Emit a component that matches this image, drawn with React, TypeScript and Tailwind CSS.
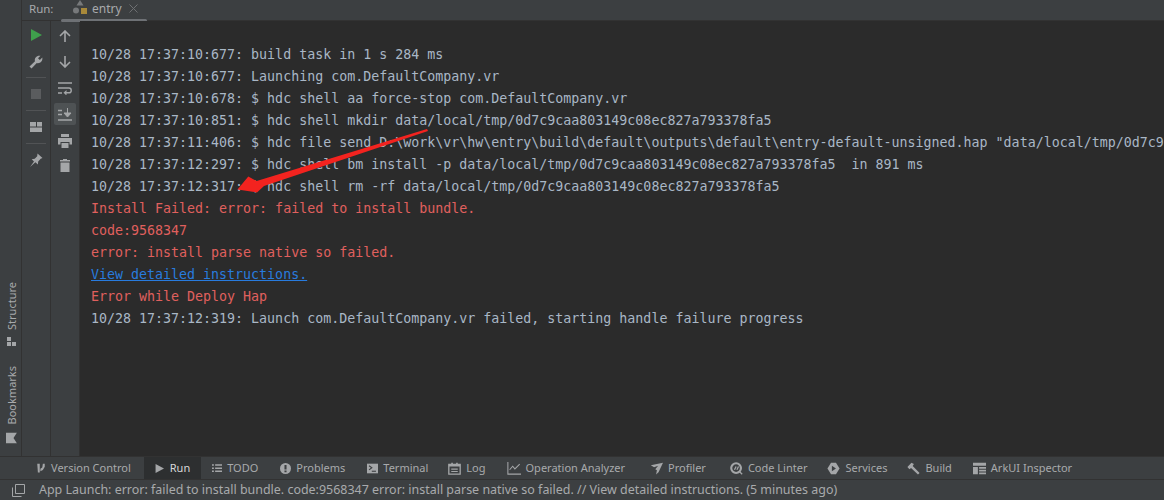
const g = "#a4a6a8";

function Ico({ size = 16, children, className = "" }: { size?: number; children: React.ReactNode; className?: string }) {
  return (
    <svg width={size} height={size} viewBox="0 0 16 16" className={"shrink-0 " + className}>
      {children}
    </svg>
  );
}

const logLines = [
  { t: "10/28 17:37:10:677: build task in 1 s 284 ms", c: "text-[#a9b7c6]" },
  { t: "10/28 17:37:10:677: Launching com.DefaultCompany.vr", c: "text-[#a9b7c6]" },
  { t: "10/28 17:37:10:678: $ hdc shell aa force-stop com.DefaultCompany.vr", c: "text-[#a9b7c6]" },
  { t: "10/28 17:37:10:851: $ hdc shell mkdir data/local/tmp/0d7c9caa803149c08ec827a793378fa5", c: "text-[#a9b7c6]" },
  { t: '10/28 17:37:11:406: $ hdc file send D:\\work\\vr\\hw\\entry\\build\\default\\outputs\\default\\entry-default-unsigned.hap "data/local/tmp/0d7c9', c: "text-[#a9b7c6]" },
  { t: "10/28 17:37:12:297: $ hdc shell bm install -p data/local/tmp/0d7c9caa803149c08ec827a793378fa5  in 891 ms", c: "text-[#a9b7c6]" },
  { t: "10/28 17:37:12:317: $ hdc shell rm -rf data/local/tmp/0d7c9caa803149c08ec827a793378fa5", c: "text-[#a9b7c6]" },
  { t: "Install Failed: error: failed to install bundle.", c: "text-[#e0605e]" },
  { t: "code:9568347", c: "text-[#e0605e]" },
  { t: "error: install parse native so failed.", c: "text-[#e0605e]" },
  { t: "View detailed instructions.", c: "text-[#287bde] underline" },
  { t: "Error while Deploy Hap", c: "text-[#e0605e]" },
  { t: "10/28 17:37:12:319: Launch com.DefaultCompany.vr failed, starting handle failure progress", c: "text-[#a9b7c6]" },
];

const tabs: { label: string; active?: boolean; cls: string; icon: React.ReactNode }[] = [
  {
    label: "Version Control",
    cls: "gap-[5px] pl-[11px] pr-[13px]",
    icon: (
      <Ico size={10}>
        <path d="M2 1h4v14H3zM11 1h3v5l-3 5-4 2V9l3-2z" fill={g} />
      </Ico>
    ),
  },
  {
    label: "Run",
    active: true,
    cls: "gap-[6px] pl-[11px] pr-[11px]",
    icon: (
      <Ico size={9}>
        <path d="M1 0l15 8-15 8z" fill={g} />
      </Ico>
    ),
  },
  {
    label: "TODO",
    cls: "gap-[5px] pl-[11px] pr-[11px]",
    icon: (
      <Ico size={10}>
        <path d="M0 2h3v2.500H0zM5 2h11v2.500H5zM0 7h3v2.500H0zM5 7h11v2.500H5zM0 12h3v2.500H0zM5 12h11v2.500H5z" fill={g} />
      </Ico>
    ),
  },
  {
    label: "Problems",
    cls: "gap-[5px] pl-[11px] pr-[11px]",
    icon: (
      <Ico size={11}>
        <circle cx="8" cy="8" r="8" fill={g} />
        <path d="M6.500 3h3v6.500h-3zM6.500 11h3v2.500h-3z" fill="#3c3f41" />
      </Ico>
    ),
  },
  {
    label: "Terminal",
    cls: "gap-[5px] pl-[11px] pr-[9px]",
    icon: (
      <Ico size={11}>
        <rect x="0" y="1" width="16" height="14" fill={g} />
        <path d="M3 4l4 3-4 3" fill="none" stroke="#3c3f41" strokeWidth="1.6" />
        <path d="M7 12h6" stroke="#3c3f41" strokeWidth="1.6" />
      </Ico>
    ),
  },
  {
    label: "Log",
    cls: "gap-[5px] pl-[11px] pr-[10px]",
    icon: (
      <Ico size={13}>
        <path d="M1 3h14v12H1z" fill="none" stroke={g} strokeWidth="1.6" />
        <path d="M1 3h14v2.500H1zM4 1h2v3H4zM10 1h2v3h-2zM4 8h8v1.400H4zM4 11h8v1.400H4z" fill={g} />
      </Ico>
    ),
  },
  {
    label: "Operation Analyzer",
    cls: "gap-[5px] pl-[11px] pr-[14px]",
    icon: (
      <Ico size={14}>
        <path d="M1 1v14h15" fill="none" stroke={g} strokeWidth="1.200" />
        <path d="M3 10l3.500-4 2.500 3L14.500 3.500" fill="none" stroke={g} strokeWidth="1.200" />
      </Ico>
    ),
  },
  {
    label: "Profiler",
    cls: "gap-[5px] pl-[11px] pr-[13px]",
    icon: (
      <Ico size={13}>
        <path d="M16 1L1 4l4 2.500 5-2-3.500 4.500 2 1-1 5.500 3-3z" fill={g} />
      </Ico>
    ),
  },
  {
    label: "Code Linter",
    cls: "gap-[5px] pl-[11px] pr-[9px]",
    icon: (
      <Ico size={13}>
        <circle cx="7.500" cy="7.500" r="6" fill="none" stroke={g} strokeWidth="2.600" />
        <path d="M11 11l4 4M5.500 9.500l2-4M8.500 9.500l2-4" stroke={g} strokeWidth="1.600" />
      </Ico>
    ),
  },
  {
    label: "Services",
    cls: "gap-[5px] pl-[11px] pr-[9px]",
    icon: (
      <Ico size={13}>
        <path d="M5 1h6l4.500 7-4.500 7H5L0.500 8z" fill={g} />
        <path d="M6 4.500l5 3.500-5 3.500z" fill="#3c3f41" />
      </Ico>
    ),
  },
  {
    label: "Build",
    cls: "gap-[5px] pl-[11px] pr-[10px]",
    icon: (
      <Ico size={13}>
        <path d="M0.500 6l5-5 3 1.500L7 5l8.500 8.500-2 2L5 7.500 3 9z" fill={g} />
      </Ico>
    ),
  },
  {
    label: "ArkUI Inspector",
    cls: "gap-[5px] pl-[11px] pr-[11px]",
    icon: (
      <Ico size={13}>
        <path d="M0 1h16v3.500H0zM0 6h6v9H0zM7.500 6H16v2.200H7.500zM7.500 9.500H16v2.200H7.500zM7.500 13H16v2H7.500z" fill={g} />
      </Ico>
    ),
  },
];

export default function App() {
  return (
    <div className="flex h-[500px] w-[1164px] flex-col overflow-hidden bg-[#3c3f41] font-['Noto_Sans',sans-serif] text-[#a8aaac]">
      <div className="flex min-h-0 flex-1">
        {/* far left stripe */}
        <div className="flex w-[22px] shrink-0 flex-col justify-end border-r border-[#323232] pb-[13px] pl-[1px]">
          <div className="mb-[20px] flex items-center gap-[7px] self-center [writing-mode:vertical-rl] rotate-180">
            <svg width="9" height="9" viewBox="0 0 9 9" className="rotate-90">
              <path d="M0 0h4v4H0zM5 0h4v4H5zM0 5h4v4H0z" fill={g} />
            </svg>
            <span className="text-[11px] leading-none">Structure</span>
          </div>
          <div className="flex items-center gap-[8px] self-center [writing-mode:vertical-rl] rotate-180">
            <svg width="11" height="11" viewBox="0 0 11 11" className="rotate-90">
              <path d="M0 0h11v11L5.500 7.500 0 11z" fill={g} />
            </svg>
            <span className="text-[11px] leading-none">Bookmarks</span>
          </div>
        </div>

        <div className="flex min-w-0 flex-1 flex-col">
          {/* run tab header */}
          <div className="flex h-[21px] shrink-0 items-start border-b border-[#323232] pl-[7px]">
            <span className="mt-[1px] w-[31px] text-[11.5px] leading-[15px]">Run:</span>
            <div className="relative flex h-[21px] w-[87px] items-start pl-[13px]">
              <svg width="15" height="15" viewBox="0 0 15 15">
                <path d="M7 0l3.500 5.500h-7z" fill="#77797b" />
                <circle cx="3" cy="10.500" r="3" fill="#77797b" />
                <rect x="8" y="8" width="6" height="6" fill="#a8893a" />
              </svg>
              <span className="ml-[4px] mt-[1px] text-[12px] leading-[15px]">entry</span>
              <svg width="9" height="9" viewBox="0 0 9 9" className="ml-[7px] mt-[4px]">
                <path d="M0.500 0.500l8 8M8.500 0.500l-8 8" stroke="#6e7072" strokeWidth="1" />
              </svg>
              <div className="absolute bottom-[-1px] left-[1px] right-0 h-[3px] rounded-sm bg-[#6e7175]" />
            </div>
          </div>

          <div className="flex min-h-0 flex-1">
            {/* run actions */}
            <div className="flex w-[29px] shrink-0 flex-col items-center border-r border-[#323232] pt-[8px]">
              <svg width="11" height="12" viewBox="0 0 11 12" className="mb-[14px]">
                <path d="M0 0l11 6-11 6z" fill="#3f9f4c" />
              </svg>
              <svg width="14" height="14" viewBox="0 0 14 14" className="mb-[8px]">
                <path d="M0.500 11.500L6 6.200C5 3 8 0 11.500 0.800L9 3.300l1.800 1.800 2.500-2.500c0.700 3.500-2.300 6.400-5.500 5.500l-5.300 5.500z" fill={g} />
              </svg>
              <div className="mb-[11px] h-px w-[20px] bg-[#515355]" />
              <div className="mb-[11px] h-[10px] w-[10px] bg-[#5a5c5e]" />
              <div className="mb-[11px] h-px w-[20px] bg-[#515355]" />
              <svg width="12" height="10" viewBox="0 0 12 10" className="mb-[11px]">
                <path d="M0 0h6v4.500H0zM7 0h5v4.500H7zM0 5.500h12V10H0z" fill={g} />
              </svg>
              <div className="mb-[9px] h-px w-[20px] bg-[#515355]" />
              <svg width="14" height="15" viewBox="0 0 14 15">
                <path d="M8.500 0.500l5 4.500-1.800 0.800-2.500 2.700-0.300 3-2.500-2.200L1 14l4-5.500-2.300-2.200 3-0.500 2.500-2.500z" fill={g} />
              </svg>
            </div>

            {/* console actions */}
            <div className="flex w-[29px] shrink-0 flex-col items-center border-r border-[#323232] pt-[9px]">
              <svg width="12" height="12" viewBox="0 0 12 12" className="mb-[14px]">
                <path d="M6 12V1.500M1 6l5-5 5 5" fill="none" stroke={g} strokeWidth="1.600" />
              </svg>
              <svg width="12" height="12" viewBox="0 0 12 12" className="mb-[14px]">
                <path d="M6 0v10.500M1 6l5 5 5-5" fill="none" stroke={g} strokeWidth="1.600" />
              </svg>
              <svg width="14" height="13" viewBox="0 0 14 13" className="mb-[8px]">
                <path d="M0 1h14M0 6h11c3 0 3 4.800 0 4.800H8M0 11h4" fill="none" stroke={g} strokeWidth="1.400" />
                <path d="M8.500 8v5.500L5.500 10.800z" fill={g} />
              </svg>
              <div className="mb-[9px] flex h-[22px] w-[22px] shrink-0 items-center justify-center rounded-[2px] bg-[#4e5254]">
                <svg width="14" height="13" viewBox="0 0 14 13">
                  <path d="M0 2.500h4M0 6.500h4M0 12h14" stroke={g} strokeWidth="1.400" />
                  <path d="M9.500 0v5M6 5h7l-3.500 4z" stroke={g} strokeWidth="1" fill={g} />
                </svg>
              </div>
              <svg width="14" height="14" viewBox="0 0 14 14" className="mb-[11px]">
                <path d="M3 0h8v3H3zM0 4h14v6.500h-2.500V8h-9v2.500H0zM3.500 9h7v5h-7z" fill={g} />
              </svg>
              <svg width="10" height="13" viewBox="0 0 10 13">
                <path d="M3 0h4v1h3v1.500H0V1h3zM0.500 3.500h9V13h-9z" fill={g} />
              </svg>
            </div>

            {/* console */}
            <div className="relative min-w-0 flex-1 overflow-hidden bg-[#2b2b2b] pl-[11px] pt-[23px] font-['DejaVu_Sans_Mono',monospace] text-[13.3px] leading-[22px]">
              {logLines.map((l, i) => (
                <div key={i} className={"whitespace-pre " + l.c}>
                  {l.t}
                </div>
              ))}
              {/* red annotation arrow */}
              <svg width="200" height="70" viewBox="0 0 200 70" className="absolute left-[155px] top-[108px]">
                <path d="M192 0L21.700 52 13.300 47.500 2.500 60.500 22 63.500 29 57 193 2z" fill="#f3231f" />
              </svg>
            </div>
          </div>
        </div>
      </div>

      {/* tool windows bar */}
      <div className="flex h-[23px] shrink-0 items-stretch border-t border-[#323232] pl-[25px] text-[11px]">
        {tabs.map((t) => (
          <div
            key={t.label}
            className={"flex items-center " + t.cls + (t.active ? " bg-[#2d2f30] text-[#d8d8d8]" : "")}
          >
            {t.icon}
            <span className="whitespace-nowrap">{t.label}</span>
          </div>
        ))}
      </div>

      {/* status bar */}
      <div className="flex h-[21px] shrink-0 items-center border-t border-[#323232] pl-[12px] text-[12.46px] text-[#a8aaac]">
        <svg width="13" height="13" viewBox="0 0 13 13" className="mr-[14px] shrink-0">
          <path d="M3.500 0.500h9v9h-9zM0.500 3.500v9h9" fill="none" stroke={g} strokeWidth="1" />
        </svg>
        <span className="whitespace-nowrap">
          App Launch: error: failed to install bundle. code:9568347 error: install parse native so failed. // View detailed instructions. (5 minutes ago)
        </span>
      </div>
    </div>
  );
}
